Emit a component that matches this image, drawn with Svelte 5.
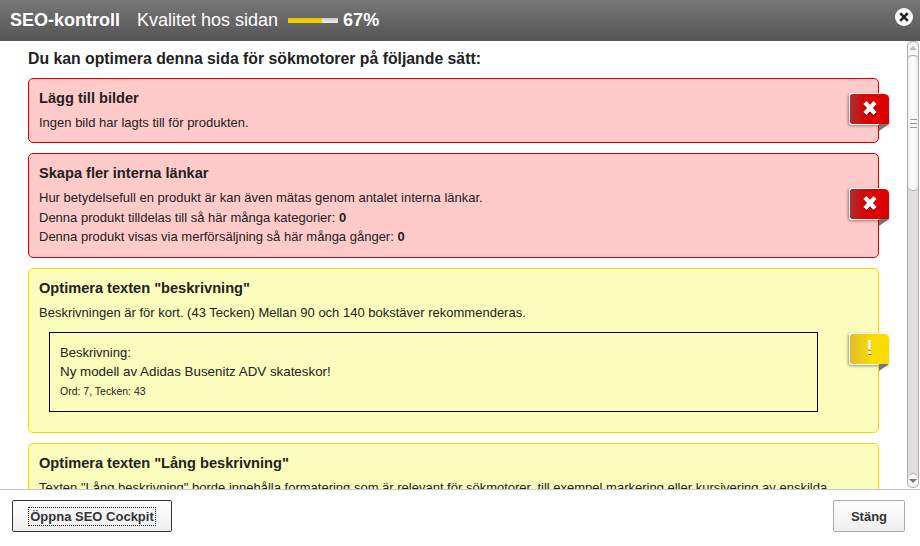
<script>
  const cards = [
    {
      kind: "error",
      title: "Lägg till bilder",
      lines: [{ text: "Ingen bild har lagts till för produkten." }]
    },
    {
      kind: "error",
      title: "Skapa fler interna länkar",
      lines: [
        { text: "Hur betydelsefull en produkt är kan även mätas genom antalet interna länkar." },
        { text: "Denna produkt tilldelas till så här många kategorier: ", value: "0" },
        { text: "Denna produkt visas via merförsäljning så här många gånger: ", value: "0" }
      ]
    },
    {
      kind: "warn",
      title: 'Optimera texten "beskrivning"',
      lines: [{ text: "Beskrivningen är för kort. (43 Tecken) Mellan 90 och 140 bokstäver rekommenderas." }],
      quote: true
    },
    {
      kind: "warn",
      noBadge: true,
      title: 'Optimera texten "Lång beskrivning"',
      lines: [
        { text: 'Texten "Lång beskrivning" borde innehålla formatering som är relevant för sökmotorer, till exempel markering eller kursivering av enskilda' }
      ]
    }
  ];
</script>

<div class="dialog">
  <header class="top">
    <span class="name">SEO-kontroll</span>
    <span class="quality">Kvalitet hos sidan</span>
    <span class="meter"><span class="meter-fill" style="width: 67%"></span></span>
    <span class="score">67%</span>
    <button class="close" aria-label="Stäng">
      <svg width="10" height="10" viewBox="0 0 10 10">
        <path d="M1.2 1.2 8.8 8.8M8.8 1.2 1.2 8.8" stroke="#222" stroke-width="2.6" />
      </svg>
    </button>
  </header>

  <div class="middle">
    <main class="content">
      <h2>Du kan optimera denna sida för sökmotorer på följande sätt:</h2>
      {#each cards as card}
        <section class="card {card.kind}">
          <h3>{card.title}</h3>
          {#each card.lines as line}
            <p>{line.text}{#if line.value}<b>{line.value}</b>{/if}</p>
          {/each}
          {#if card.quote}
            <div class="quote">
              <p>Beskrivning:</p>
              <p class="model">Ny modell av Adidas Busenitz ADV skateskor!</p>
              <small>Ord: 7, Tecken: 43</small>
            </div>
          {/if}
          {#if !card.noBadge}
            <div class="badge">
              {#if card.kind === "error"}
                <svg class="cross" width="16" height="16" viewBox="0 0 14 14">
                  <path d="M2.6 2.2 11.4 11.8M11.4 2.2 2.6 11.8" stroke="#fff" stroke-width="3.8" />
                </svg>
              {:else}
                <span class="bang">!</span>
              {/if}
              <span class="fold"></span>
            </div>
          {/if}
        </section>
      {/each}
    </main>

    <div class="scrollbar">
      <span class="arrow up"></span>
      <div class="thumb"><span class="grip"></span></div>
      <div class="track"></div>
      <span class="arrow down"></span>
    </div>
  </div>

  <footer class="bottom">
    <button class="btn focus"><span>Öppna SEO Cockpit</span></button>
    <button class="btn">Stäng</button>
  </footer>
</div>

<style>
  :global(body) {
    margin: 0;
    background: #fff;
  }

  .dialog {
    width: 920px;
    height: 546px;
    display: flex;
    flex-direction: column;
    font-family: "Liberation Sans", Arial, sans-serif;
    color: #222;
    overflow: hidden;
  }

  .top {
    height: 41px;
    flex: none;
    display: flex;
    align-items: center;
    padding: 0 7px 0 10px;
    background: linear-gradient(#777, #555);
    color: #fff;
    font-size: 18px;
    box-sizing: border-box;
  }

  .name {
    font-weight: bold;
    margin-right: 17px;
  }

  .meter {
    width: 50px;
    height: 5px;
    margin: 0 5px 0 10px;
    background: linear-gradient(#ccc, #eee);
    display: block;
  }

  .meter-fill {
    display: block;
    height: 100%;
    background: linear-gradient(#e8c200, #f8d800);
  }

  .score {
    font-weight: bold;
  }

  .close {
    margin-left: auto;
    align-self: flex-start;
    margin-top: 8px;
    width: 18px;
    height: 18px;
    padding: 0;
    border: none;
    border-radius: 50%;
    background: #fff;
    display: flex;
    align-items: center;
    justify-content: center;
  }

  .middle {
    flex: 1;
    min-height: 0;
    display: flex;
  }

  .content {
    flex: 1;
    min-width: 0;
    padding: 0 28px;
    overflow: hidden;
  }

  h2 {
    margin: 9px 0 9.9px;
    font-size: 15.8px;
    line-height: 18px;
  }

  .card {
    position: relative;
    width: 851px;
    box-sizing: border-box;
    border: 1px solid;
    border-radius: 5px;
    padding: 9px 10px 10px;
    margin-bottom: 10px;
    font-size: 13px;
  }

  .error {
    background: #ffcaca;
    border-color: #e00000;
  }

  .warn {
    background: #fbfdbc;
    border-color: #f5d800;
    padding-bottom: 20px;
  }

  h3 {
    margin: 0 0 4px;
    font-size: 14.6px;
    line-height: 21px;
  }

  p {
    margin: 0;
    line-height: 19.5px;
    white-space: nowrap;
  }

  .model {
    font-size: 13.35px;
  }

  .quote {
    width: 769px;
    height: 80px;
    box-sizing: border-box;
    margin: 9.5px 0 0 10px;
    border: 1px solid #000;
    padding: 10px;
  }

  .quote small {
    display: block;
    font-size: 10.5px;
    line-height: 18px;
  }

  .badge {
    position: absolute;
    top: 50%;
    margin-top: -17.5px;
    right: -11px;
    width: 40px;
    height: 32px;
    box-sizing: border-box;
    border: 1px solid #fff;
    border-right: none;
    border-radius: 3px 5px 0 3px;
    display: flex;
    align-items: center;
    justify-content: center;
    padding-bottom: 3px;
    box-shadow: -1px 1px 3px rgba(0, 0, 0, 0.4);
  }

  .error .badge {
    background: linear-gradient(90deg, #a83030, #dd0000 45%);
  }

  .warn .badge {
    background: linear-gradient(90deg, #e0bc30, #f8dc00 55%);
  }

  .cross {
    filter: drop-shadow(0 1px 0 rgba(70, 0, 0, 0.7));
  }

  .bang {
    color: #fff;
    font-size: 20px;
    font-weight: bold;
    line-height: 1;
    text-shadow: 0 1px 0 #a88000;
  }

  .fold {
    position: absolute;
    right: 0;
    bottom: -7px;
    width: 0;
    height: 0;
    border-top: 7px solid #777;
    border-right: 10px solid transparent;
  }

  .scrollbar {
    width: 12px;
    margin-right: 1px;
    flex: none;
    display: flex;
    flex-direction: column;
    background: #e0dedc;
    border-left: 1px solid #b0aeac;
    border-right: 1px solid #b0aeac;
    box-sizing: border-box;
    margin-bottom: 1px;
    border-radius: 5px;
    overflow: hidden;
  }

  .arrow {
    height: 13px;
    flex: none;
    background: #f6f6f6;
    position: relative;
  }

  .arrow::after {
    content: "";
    position: absolute;
    left: 1px;
    border-left: 4px solid transparent;
    border-right: 4px solid transparent;
  }

  .up {
    border-top: 1px solid #b0aeac;
    border-radius: 5px 5px 0 0;
  }

  .up::after {
    top: 4px;
    border-bottom: 4px solid #b8b8b8;
  }

  .down {
    border-top: 1px solid #b0aeac;
    border-bottom: 1px solid #b0aeac;
    border-radius: 5px;
  }

  .down::after {
    top: 5px;
    border-top: 4px solid #777;
  }

  .thumb {
    height: 134px;
    flex: none;
    background: linear-gradient(90deg, #f0f0f0, #fff 50%, #ececec);
    border-top: 1px solid #aaa;
    border-bottom: 1px solid #aaa;
    border-radius: 5px;
    display: flex;
    align-items: center;
    justify-content: center;
  }

  .grip {
    width: 7px;
    height: 7px;
    border-top: 1px solid #999;
    border-bottom: 1px solid #999;
    position: relative;
  }

  .grip::after {
    content: "";
    position: absolute;
    left: 0;
    right: 0;
    top: 3px;
    border-top: 1px solid #999;
  }

  .track {
    flex: 1;
  }

  .bottom {
    height: 57px;
    flex: none;
    box-sizing: border-box;
    border-top: 1px solid #c8c8c8;
    background: #fff;
    display: flex;
    align-items: center;
    justify-content: space-between;
    padding: 0 15px 4px 12px;
  }

  .btn {
    height: 32px;
    width: 72px;
    padding: 0;
    border: 1px solid #a8a8a8;
    border-radius: 2px;
    background: linear-gradient(#fff, #eee);
    font-family: inherit;
    font-size: 13px;
    font-weight: bold;
    color: #333;
  }

  .focus {
    width: 160px;
    border-color: #333;
  }

  .focus span {
    border: 1px dotted #222;
    padding: 1px;
  }
</style>
